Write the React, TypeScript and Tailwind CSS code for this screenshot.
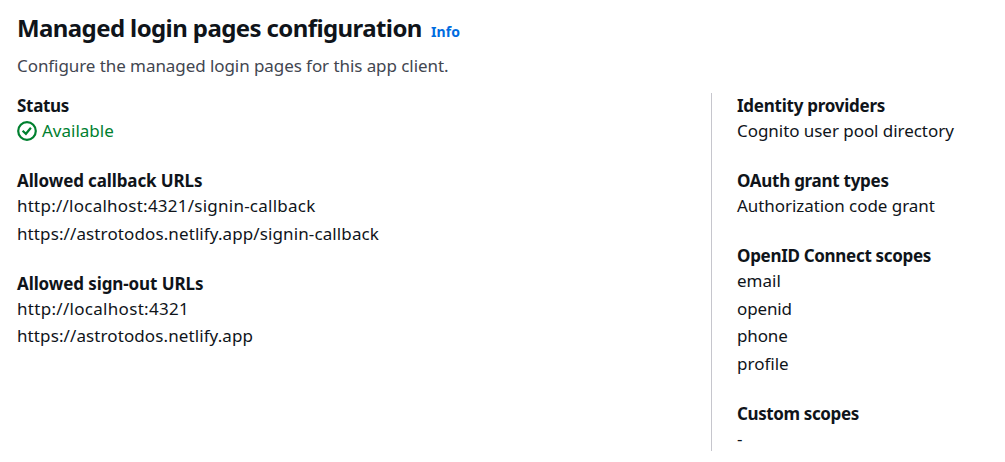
type Line = { text: string; cls?: string };

type GroupProps = { title: string; titleCls: string; lines: Line[] };

function Group({ title, titleCls, lines }: GroupProps) {
  return (
    <section>
      <h3 className={`h-[25px] font-bold ${titleCls}`}>{title}</h3>
      <ul className="flex flex-col gap-[2.5px]">
        {lines.map((line) => (
          <li key={line.text} className={`h-[25px] ${line.cls ?? ""}`}>
            {line.text}
          </li>
        ))}
      </ul>
    </section>
  );
}

function StatusIcon() {
  return (
    <svg className="size-5" viewBox="0 0 20 20" fill="none" stroke="currentColor" strokeWidth="2.2">
      <circle cx="10" cy="10" r="8.8" />
      <path d="M5.6 9.8 8.9 12.8 13.9 6.8" strokeLinejoin="miter" />
    </svg>
  );
}

export default function App() {
  return (
    <main className="h-[462px] bg-white pl-[17px] pt-[13px] font-['Noto_Sans',sans-serif] text-[17px] leading-[25px] text-[#0f141a]">
      <header>
        <div className="flex h-[30px] items-baseline gap-[10px]">
          <h2 className="w-[404px] whitespace-nowrap text-[24px] font-bold leading-[30px] tracking-[-0.6px]">
            Managed login pages configuration
          </h2>
          <a className="text-[14px] font-bold tracking-[0.1px] text-[#006ce0]">Info</a>
        </div>
        <p className="mt-[10px] h-[25px] tracking-[-0.07px] text-[#424650]">
          Configure the managed login pages for this app client.
        </p>
      </header>
      <div className="mt-[15px] flex">
        <div className="flex w-[694px] flex-col gap-[25px]">
          <section>
            <h3 className="h-[25px] font-bold tracking-[-0.3px]">Status</h3>
            <div className="flex h-[25px] items-center gap-[5px] text-[#00802f]">
              <StatusIcon />
              <span>Available</span>
            </div>
          </section>
          <Group
            title="Allowed callback URLs"
            titleCls="tracking-[-0.12px]"
            lines={[
              { text: "http://localhost:4321/signin-callback", cls: "tracking-[0.24px]" },
              { text: "https://astrotodos.netlify.app/signin-callback", cls: "tracking-[0.11px]" },
            ]}
          />
          <Group
            title="Allowed sign-out URLs"
            titleCls="tracking-[-0.1px]"
            lines={[
              { text: "http://localhost:4321", cls: "tracking-[0.3px]" },
              { text: "https://astrotodos.netlify.app", cls: "tracking-[0.1px]" },
            ]}
          />
        </div>
        <div className="flex flex-col gap-[25px] border-l border-[#c6c6cd] pl-[25px]">
          <Group
            title="Identity providers"
            titleCls="tracking-[-0.25px]"
            lines={[{ text: "Cognito user pool directory", cls: "tracking-[-0.05px]" }]}
          />
          <Group
            title="OAuth grant types"
            titleCls="tracking-[-0.27px]"
            lines={[{ text: "Authorization code grant", cls: "tracking-[-0.06px]" }]}
          />
          <Group
            title="OpenID Connect scopes"
            titleCls="tracking-[-0.31px]"
            lines={[
              { text: "email" },
              { text: "openid", cls: "tracking-[-0.15px]" },
              { text: "phone", cls: "tracking-[-0.15px]" },
              { text: "profile" },
            ]}
          />
          <Group title="Custom scopes" titleCls="tracking-[-0.39px]" lines={[{ text: "-" }]} />
        </div>
      </div>
    </main>
  );
}
